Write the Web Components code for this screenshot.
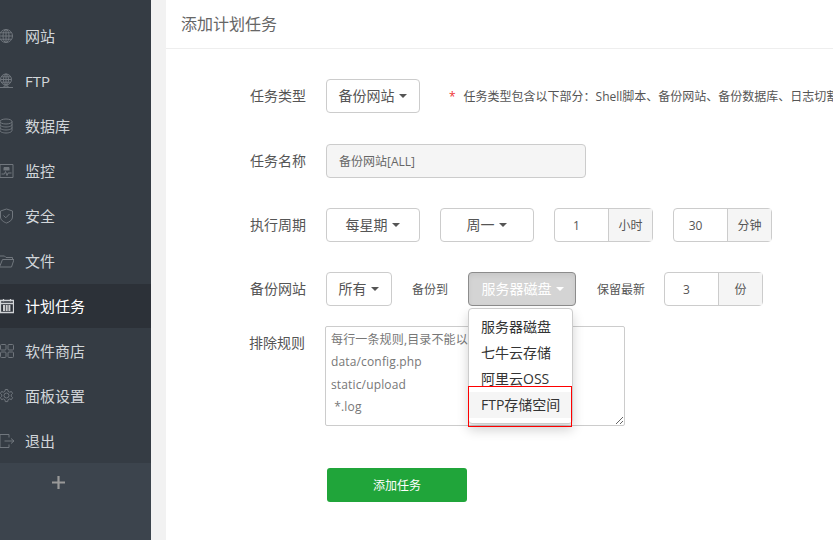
<!DOCTYPE html>
<html lang="zh">
<head>
<meta charset="utf-8">
<title>添加计划任务</title>
<style>
  html, body { margin: 0; height: 100%; overflow: hidden; }
  body { font-family: "Open Sans", "Noto Sans CJK SC", sans-serif; font-size: 14px; color: #555; background: #f2f2f2; }
  #app { display: flex; height: 540px; width: 833px; }
  nav-item[active] ~ nav-item { padding-bottom: 0; }
</style>
</head>
<body>
<div id="app">
  <app-sidebar>
    <nav-item icon="globe">网站</nav-item>
    <nav-item icon="ftp">FTP</nav-item>
    <nav-item icon="db">数据库</nav-item>
    <nav-item icon="monitor">监控</nav-item>
    <nav-item icon="shield">安全</nav-item>
    <nav-item icon="folder">文件</nav-item>
    <nav-item icon="calendar" active>计划任务</nav-item>
    <nav-item icon="apps">软件商店</nav-item>
    <nav-item icon="gear">面板设置</nav-item>
    <nav-item icon="exit">退出</nav-item>
  </app-sidebar>
  <task-panel heading="添加计划任务">
    <form-row label="任务类型">
      <drop-button style="width:94px">备份网站</drop-button>
      <span style="color:#e33;margin-left:29px;font-size:12px">*</span>
      <span style="margin-left:8px;font-size:12px;white-space:nowrap;color:#555">任务类型包含以下部分：Shell脚本、备份网站、备份数据库、日志切割、释放内存、访问URL</span>
    </form-row>
    <form-row label="任务名称" style="margin-top:31px">
      <text-field style="width:260px">备份网站[ALL]</text-field>
    </form-row>
    <form-row label="执行周期" style="margin-top:30px">
      <drop-button style="width:94px">每星期</drop-button>
      <drop-button style="width:94px;margin-left:20px">周一</drop-button>
      <unit-field value="1" unit="小时" style="margin-left:20px"></unit-field>
      <unit-field value="30" unit="分钟" style="margin-left:20px"></unit-field>
    </form-row>
    <form-row label="备份网站" style="margin-top:30px">
      <drop-button style="width:66px">所有</drop-button>
      <span style="margin-left:20px;font-size:12px;width:56px">备份到</span>
      <backup-target>服务器磁盘</backup-target>
      <span style="margin-left:21px;font-size:12px;white-space:nowrap">保留最新</span>
      <unit-field value="3" unit="份" style="margin-left:19px"></unit-field>
    </form-row>
    <form-row label="排除规则" style="margin-top:20px;align-items:flex-start" tight>
      <rule-box></rule-box>
    </form-row>
    <green-button>添加任务</green-button>
  </task-panel>
</div>

<script>
  const ICONS = {
    globe: '<circle cx="8" cy="8" r="6.500"/><ellipse cx="8" cy="8" rx="3" ry="6.500"/><path d="M8 1.500v13M1.500 8h13M2.500 4.800h11M2.500 11.200h11"/>',
    ftp: '<circle cx="8" cy="6.500" r="5.500"/><ellipse cx="8" cy="6.500" rx="2.500" ry="5.500"/><path d="M8 1v11M2.500 6.500h11M3.300 3.800h9.400M3.300 9.200h9.400M1 14.500h14M6 13h4v1.500H6z"/>',
    db: '<ellipse cx="8" cy="3.500" rx="6" ry="2.500"/><path d="M2 3.500v9c0 1.400 2.700 2.500 6 2.500s6-1.100 6-2.500v-9M2 6.500c0 1.400 2.700 2.500 6 2.500s6-1.100 6-2.500M2 9.500c0 1.400 2.700 2.500 6 2.500s6-1.100 6-2.500"/>',
    monitor: '<path d="M2 1.500h13v13H2zM6 7.500V4.500h5v3M3.500 11h3l1-2.500 1.500 4 1-2.500h3.500"/><path d="M6.500 5h4v2h-4z" fill="#70767d"/>',
    shield: '<path d="M8.500 1l6 2v6c0 3-3 5-6 6-3-1-6-3-6-6V3z"/><path d="M5.500 7.500l2.300 2.300L11.500 6"/>',
    folder: '<path d="M1.500 14V3h5l1.500 1.500h6.500V7M1.500 14l3-7.500h11.500l-2.500 7.500z"/>',
    calendar: '<path d="M2.500 2.500h13v12h-13zM2.500 5.500h13M5.500 1v2.500M12.500 1v2.500" stroke-width="1.300"/><path d="M5 8h8M5 10h8M5 12h8" stroke="#fff" stroke-dasharray="2 .7" stroke-width="1.300"/>',
    apps: '<rect x="2.500" y="1.500" width="5.500" height="5.500" rx="1"/><rect x="10" y="1.500" width="5.500" height="5.500" rx="1"/><rect x="2.500" y="9" width="5.500" height="5.500" rx="1"/><rect x="10" y="9" width="5.500" height="5.500" rx="1"/>',
    gear: '<path d="M7.300 1.500h2.400l.4 1.900 1.500.8 1.800-.7 1.200 2-1.400 1.300v1.500l1.400 1.300-1.200 2-1.800-.7-1.500.8-.4 1.900H7.300l-.4-1.900-1.500-.8-1.800.7-1.200-2 1.400-1.300V6.800L2.400 5.500l1.200-2 1.800.7 1.500-.8z"/><circle cx="8.500" cy="7.500" r="2.500"/>',
    exit: '<path d="M11 4.500v-3H2v13h9v-3M6.500 8H16M13 5.500l3 2.500-3 2.500"/>'
  };

  class AppSidebar extends HTMLElement {
    connectedCallback() {
      this.attachShadow({ mode: "open" }).innerHTML = `<style>
        :host { display: flex; flex-direction: column; width: 151px; flex: none; height: 100%; background: #353c44; overflow: hidden; }
        .list { padding-top: 14px; }
        .add { flex: 1; background: #3c444d; padding-right: 35px; }
        svg { display: block; margin: 13px auto 0; }
      </style>
      <div class="list"><slot></slot></div>
      <div class="add"><svg width="13" height="13" viewBox="0 0 13 13"><path d="M0 6.500h13M6.500 0v13" stroke="#999" stroke-width="2.200"/></svg></div>`;
    }
  }

  class NavItem extends HTMLElement {
    connectedCallback() {
      this.attachShadow({ mode: "open" }).innerHTML = `<style>
        :host { display: flex; box-sizing: border-box; align-items: center; height: 45px; padding-bottom: 2px; color: #d2d6da; font-size: 15px; }
        :host([active]) { background: #2c3138; color: #fff; height: 44px; padding-bottom: 1px; }
        svg { flex: none; width: 16px; height: 16px; margin: 1px 11px 0 -2px; fill: none; stroke: #70767d; stroke-width: 1; }
        :host([active]) svg { stroke: #d0d3d6; }
      </style>
      <svg viewBox="0 0 16 16">${ICONS[this.getAttribute("icon")]}</svg><slot></slot>`;
    }
  }

  class TaskPanel extends HTMLElement {
    connectedCallback() {
      this.attachShadow({ mode: "open" }).innerHTML = `<style>
        :host { display: block; flex: 1; margin-left: 15px; background: #fff; min-width: 0; overflow: hidden; }
        h1 { margin: 0; height: 48px; border-bottom: 1px solid #eee; padding-left: 15px; font-size: 16px; font-weight: 400; line-height: 48px; color: #666; }
        .body { padding: 30px 0 0 84px; }
      </style>
      <h1>${this.getAttribute("heading")}</h1>
      <div class="body"><slot></slot></div>`;
    }
  }

  class FormRow extends HTMLElement {
    connectedCallback() {
      this.attachShadow({ mode: "open" }).innerHTML = `<style>
        :host { display: flex; align-items: center; min-height: 34px; white-space: nowrap; font-size: 14px; color: #555; }
        .label { flex: none; width: 76px; color: #555; padding-bottom: 2px; }
        :host([tight]) .label { margin-left: -1px; line-height: 34px; }
      </style>
      <span class="label">${this.getAttribute("label")}</span><slot></slot>`;
    }
  }

  class DropButton extends HTMLElement {
    connectedCallback() {
      this.attachShadow({ mode: "open" }).innerHTML = `<style>
        :host { display: inline-flex; box-sizing: border-box; height: 34px; padding: 0 1px 2px 0; align-items: center; justify-content: center; gap: 4px; border: 1px solid #ccc; border-radius: 4px; background: #fff; color: #555; font-size: 14px; flex: none; }
        i { width: 0; height: 0; margin-top: 2px; border: 4px solid transparent; border-top-color: currentColor; border-bottom: 0; }
      </style>
      <slot></slot><i></i>`;
    }
  }

  class TextField extends HTMLElement {
    connectedCallback() {
      this.attachShadow({ mode: "open" }).innerHTML = `<style>
        :host { display: flex; box-sizing: border-box; height: 34px; align-items: center; padding-left: 12px; border: 1px solid #ccc; border-radius: 4px; background: #f5f5f5; color: #666; font-size: 12px; flex: none; }
      </style><slot></slot>`;
    }
  }

  class UnitField extends HTMLElement {
    connectedCallback() {
      this.attachShadow({ mode: "open" }).innerHTML = `<style>
        :host { display: inline-flex; box-sizing: border-box; height: 34px; border: 1px solid #ccc; border-radius: 4px; font-size: 12px; color: #555; flex: none; }
        span { display: flex; align-items: center; box-sizing: border-box; }
        .val { width: 53px; justify-content: center; padding-right: 10px; }
        .unit { width: 44px; justify-content: center; border-left: 1px solid #ccc; background: #f5f5f5; }
      </style><span class="val">${this.getAttribute("value")}</span><span class="unit">${this.getAttribute("unit")}</span>`;
    }
  }

  class BackupTarget extends HTMLElement {
    connectedCallback() {
      this.attachShadow({ mode: "open" }).innerHTML = `<style>
        :host { display: inline-block; position: relative; flex: none; height: 34px; width: 108px; font-size: 14px; }
        .btn { display: flex; box-sizing: border-box; height: 34px; padding: 0 0 2px 1px; align-items: center; justify-content: center; gap: 4px; border: 1px solid #8c8c8c; border-radius: 4px; background: #d4d4d4; color: #fff; box-shadow: inset 0 3px 5px rgba(0,0,0,.06); }
        i { width: 0; height: 0; margin-top: 2px; border: 4px solid transparent; border-top-color: #fff; border-bottom: 0; }
        ul { position: absolute; z-index: 2; left: 0; top: 36px; width: 105px; box-sizing: border-box; margin: 0; padding: 5px 0; list-style: none; background: #fff; border: 1px solid #ccc; border-radius: 4px; box-shadow: 0 6px 12px rgba(0,0,0,.175); color: #333; }
        li { height: 26px; line-height: 25px; padding-left: 12px; white-space: nowrap; }
        li.hover { background: #f5f5f5; }
        .mark { position: absolute; z-index: 3; left: 0; top: 114px; width: 104px; height: 41px; box-sizing: border-box; border: 1px solid #f00; pointer-events: none; }
      </style>
      <div class="btn"><slot></slot><i></i></div>
      <ul><li>服务器磁盘</li><li>七牛云存储</li><li>阿里云OSS</li><li class="hover">FTP存储空间</li></ul>
      <div class="mark"></div>`;
    }
  }

  class RuleBox extends HTMLElement {
    connectedCallback() {
      this.attachShadow({ mode: "open" }).innerHTML = `<style>
        :host { display: block; flex: none; width: 300px; height: 100px; }
        textarea { display: block; width: 100%; height: 100%; box-sizing: border-box; margin: 0; padding: 2px 5px; border: 1px solid #ccc; border-radius: 2px; font: 12px/22.3px "Open Sans", "Noto Sans CJK SC", sans-serif; letter-spacing: .15px; color: #777; outline: 0; resize: both; overflow: hidden; }
      </style><textarea>每行一条规则,目录不能以/开头
data/config.php
static/upload
 *.log</textarea>`;
    }
  }

  class GreenButton extends HTMLElement {
    connectedCallback() {
      this.attachShadow({ mode: "open" }).innerHTML = `<style>
        :host { display: flex; box-sizing: border-box; width: 140px; height: 34px; margin: 42px 0 0 77px; align-items: center; justify-content: center; background: #20a53a; border-radius: 3px; color: #fff; font-size: 12px; }
      </style><slot></slot>`;
    }
  }

  customElements.define("app-sidebar", AppSidebar);
  customElements.define("nav-item", NavItem);
  customElements.define("task-panel", TaskPanel);
  customElements.define("form-row", FormRow);
  customElements.define("drop-button", DropButton);
  customElements.define("text-field", TextField);
  customElements.define("unit-field", UnitField);
  customElements.define("backup-target", BackupTarget);
  customElements.define("rule-box", RuleBox);
  customElements.define("green-button", GreenButton);
</script>
</body>
</html>
